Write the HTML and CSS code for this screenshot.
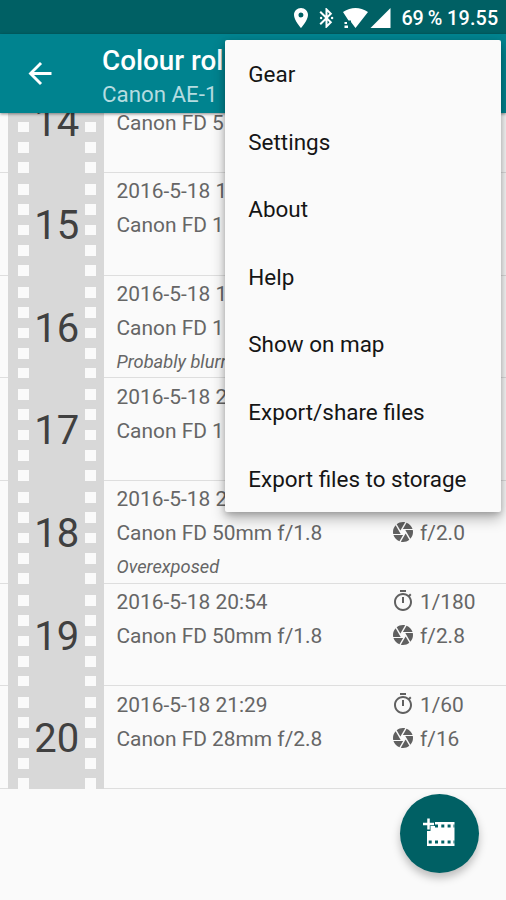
FILE: index.html
```html
<!DOCTYPE html>
<html lang="en">
<head>
<meta charset="utf-8">
<title>Colour roll</title>
<link rel="stylesheet" href="styles.css">
</head>
<body>
<svg class="defs" aria-hidden="true">
  <symbol id="timer" viewBox="0 0 24 24"><path d="M15 1H9v2h6V1zm-4 13h2V8h-2v6zm8.03-6.61l1.42-1.42c-.43-.51-.9-.99-1.41-1.41l-1.42 1.42C16.07 4.74 14.12 4 12 4c-4.97 0-9 4.03-9 9s4.02 9 9 9 9-4.03 9-9c0-2.12-.74-4.07-1.97-5.61zM12 20c-3.87 0-7-3.13-7-7s3.13-7 7-7 7 3.13 7 7-3.13 7-7 7z"/></symbol>
  <symbol id="aperture" viewBox="0 0 24 24"><path d="M9.4 10.5l4.77-8.26C13.47 2.09 12.75 2 12 2c-2.4 0-4.6.85-6.32 2.25l3.66 6.35.06-.1zM21.54 9c-.92-2.92-3.15-5.26-6-6.34L11.88 9h9.66zm.26 1h-7.49l.29.5 4.76 8.25C21 16.97 22 14.61 22 12c0-.69-.07-1.35-.2-2zM8.54 12l-3.9-6.75C3.01 7.03 2 9.39 2 12c0 .69.07 1.35.2 2h7.49l-1.15-2zm-6.08 3c.92 2.92 3.15 5.26 6 6.34L12.12 15H2.46zm11.27 0l-3.9 6.76c.7.15 1.42.24 2.17.24 2.4 0 4.6-.85 6.32-2.25l-3.66-6.35-.93 1.6z"/></symbol>
</svg>
<div class="screen">
  <header class="status">
    <svg class="s-pin" viewBox="5 2 14 20"><path d="M12 2C8.13 2 5 5.13 5 9c0 5.25 7 13 7 13s7-7.75 7-13c0-3.87-3.13-7-7-7zm0 9.5a2.5 2.5 0 1 1 0-5 2.5 2.5 0 0 1 0 5z"/></svg>
    <svg class="s-bt" viewBox="5 2 14 20"><path d="M17.71 7.71L12 2h-1v7.59L6.41 5 5 6.41 10.59 12 5 17.59 6.41 19 11 14.41V22h1l5.71-5.71-4.3-4.29 4.3-4.29zM13 5.83l1.88 1.88L13 9.59V5.83zm1.88 10.46L13 18.17v-3.76l1.88 1.88z"/><circle cx="6.6" cy="12" r="1.2"/><circle cx="17.6" cy="12" r="1.2"/></svg>
    <svg class="s-wifi" viewBox="0 0 25 20"><path d="M0 4Q12.5-4 25 4L12.5 20 8 14V12.500H5.500z"/><path d="M1.500 14H4v2H1.500zM1.500 17.500H5V20H1.500z"/></svg>
    <svg class="s-cell" viewBox="0 0 20 20"><path d="M0 20L20 0V20z"/></svg>
    <span class="battery">69 %</span>
    <span class="clock">19.55</span>
  </header>
  <div class="toolbar">
    <svg class="back" viewBox="4 4 16 16"><path d="M20 11H7.830l5.590-5.590L12 4l-8 8 8 8 1.410-1.410L7.830 13H20v-2z"/></svg>
    <div class="titles"><h1>Colour rol</h1><p>Canon AE-1</p></div>
  </div>
  <main class="list">
    <article class="row"><div class="film"><i class="holes"></i><b>14</b><i class="holes"></i></div><div class="info"><p></p><p>Canon FD 5</p></div></article>
    <article class="row"><div class="film"><i class="holes"></i><b>15</b><i class="holes"></i></div><div class="info"><p>2016-5-18 1</p><p>Canon FD 1</p></div></article>
    <article class="row"><div class="film"><i class="holes"></i><b>16</b><i class="holes"></i></div><div class="info"><p>2016-5-18 1</p><p>Canon FD 1</p><p class="note">Probably blurr</p></div></article>
    <article class="row"><div class="film"><i class="holes"></i><b>17</b><i class="holes"></i></div><div class="info"><p>2016-5-18 2</p><p>Canon FD 1</p></div></article>
    <article class="row"><div class="film"><i class="holes"></i><b>18</b><i class="holes"></i></div><div class="info"><p>2016-5-18 2</p><p>Canon FD 50mm f/1.8</p><p class="note">Overexposed</p></div><div class="exposure"><p></p><p><svg><use href="#aperture"/></svg>f/2.0</p></div></article>
    <article class="row"><div class="film"><i class="holes"></i><b>19</b><i class="holes"></i></div><div class="info"><p>2016-5-18 20:54</p><p>Canon FD 50mm f/1.8</p></div><div class="exposure"><p><svg><use href="#timer"/></svg>1/180</p><p><svg><use href="#aperture"/></svg>f/2.8</p></div></article>
    <article class="row"><div class="film"><i class="holes"></i><b>20</b><i class="holes"></i></div><div class="info"><p>2016-5-18 21:29</p><p>Canon FD 28mm f/2.8</p></div><div class="exposure"><p><svg><use href="#timer"/></svg>1/60</p><p><svg><use href="#aperture"/></svg>f/16</p></div></article>
  </main>
  <nav class="menu">
    <a>Gear</a><a>Settings</a><a>About</a><a>Help</a><a>Show on map</a><a>Export/share files</a><a>Export files to storage</a>
  </nav>
  <button class="fab" aria-label="Add frame">
    <svg viewBox="0 0 32 28"><path class="frame" d="M4 4H31.500V28H4z"/><path class="perf" d="M12 6.500h3v3h-3zM18.300 6.500h3v3h-3zM24.600 6.500h3v3h-3zM30.500 6.500h1v3h-1zM5.700 22.500h3v3h-3zM12 22.500h3v3h-3zM18.300 22.500h3v3h-3zM24.600 22.500h3v3h-3zM30.500 22.500h1v3h-1z"/><path class="cut" d="M5.500 0v13M0 6h12"/><path class="plus" d="M5.500 .5v11M0 6h11"/></svg>
  </button>
</div>
</body>
</html>
```
FILE: styles.css
```css
* { box-sizing: border-box; }
body { margin: 0; font-family: Roboto, sans-serif; background: #fafafa; }
h1, p { margin: 0; }
.defs { position: absolute; width: 0; height: 0; }
.screen { position: relative; display: flex; flex-direction: column; width: 506px; height: 900px; overflow: hidden; background: #fafafa; }

.status { flex: none; display: flex; align-items: center; height: 34px; padding: 2px 7.500px 0 0; justify-content: flex-end; background: #006064; color: #fff; font-size: 19.800px; font-weight: 500; }
.status svg { fill: #fff; flex: none; }
.s-pin { width: 14px; height: 20px; margin-right: 11px; }
.s-bt { width: 15px; height: 20px; margin-right: 9px; }
.s-wifi { width: 25px; height: 20px; margin-right: 2px; }
.s-cell { width: 21px; height: 20px; margin-right: 11px; }
.battery { width: 45.500px; white-space: nowrap; letter-spacing: -.2px; word-spacing: -.5px; }
.clock { letter-spacing: .2px; }

.toolbar { position: relative; z-index: 1; flex: none; display: flex; align-items: center; height: 79px; padding-left: 28px; background: #00838f; box-shadow: 0 1px 3px rgba(0,0,0,.45); }
.back { width: 24px; height: 23px; margin-right: 50px; fill: #fff; }
.titles { padding-top: 7px; color: #fff; }
.titles h1 { font-size: 27.800px; line-height: 34px; font-weight: 500; }
.titles p { font-size: 22.300px; line-height: 33px; color: #b5dce0; }

.list { flex: none; margin-top: -42.800px; }
.row { display: flex; height: 102.700px; padding-left: 8px; border-bottom: 1.400px solid #dedede; }
.film { display: flex; justify-content: space-between; width: 96px; height: 102.700px; padding: 0 8px 0 9.500px; background: #d8d8d8; color: #404040; }
.film b { font-size: 40px; line-height: 106px; font-weight: 400; }
.holes { width: 11px; margin-top: 11px; background: repeating-linear-gradient(#fafafa 0 10.800px, transparent 10.800px 20.300px); }
.info { width: 288px; padding: 1.300px 0 0 12.500px; color: #666; font-size: 20.900px; line-height: 34px; white-space: nowrap; }
.info p { height: 34px; }
.info .note { font-size: 18.300px; }
.note { font-style: italic; }
.exposure { padding-top: 1.300px; color: #666; font-size: 20.900px; line-height: 34px; }
.exposure p { display: flex; align-items: center; height: 34px; }
.exposure svg { width: 24px; height: 24px; margin: -2px 5px 0 -1px; fill: #606060; }

.menu { position: absolute; z-index: 2; left: 225.300px; top: 40px; width: 276px; height: 472px; background: #fafafa; border-radius: 2px; box-shadow: 0 7px 14px rgba(0,0,0,.27), 0 2px 6px rgba(0,0,0,.2); }
.menu a { display: flex; align-items: center; height: 67.500px; padding: 1px 0 0 23px; color: #151515; font-size: 22.450px; }
.fab { position: absolute; left: 400px; top: 793.500px; width: 79px; height: 79px; padding: 0; border: 0; border-radius: 50%; background: #006064; display: grid; place-items: center; box-shadow: 0 5px 9px rgba(0,0,0,.25); }
.fab svg { width: 32px; height: 28px; margin-right: 1px; margin-top: -2px; }
.frame { fill: #fff; }
.perf { fill: #006064; }
.cut { fill: none; stroke: #006064; stroke-width: 4; }
.plus { fill: none; stroke: #fff; stroke-width: 2.500; }
```
